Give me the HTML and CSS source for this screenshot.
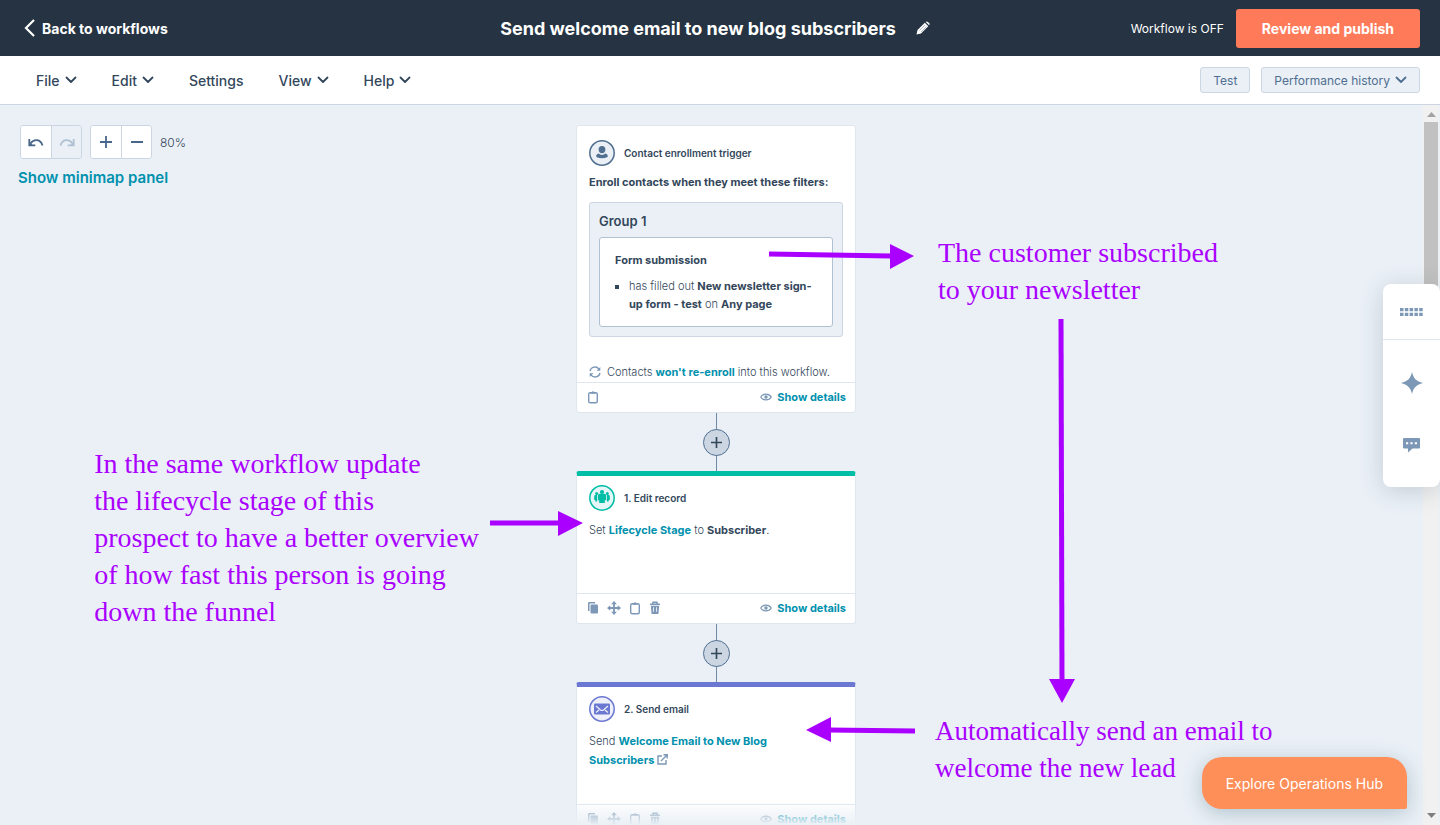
FILE: index.html
```html
<!DOCTYPE html>
<html lang="en">
<head>
    <meta charset="UTF-8">
    <meta name="viewport" content="width=device-width, initial-scale=1.0">
    <title>Send welcome email to new blog subscribers</title>
    <link rel="stylesheet" href="styles.css">
</head>
<body>

    <!-- Shared icons -->
    <svg class="sprite" aria-hidden="true">
        <symbol id="chevron" viewBox="0 0 12 8"><path d="M1.5 1.5 6 6l4.500-4.500" fill="none" stroke="currentColor" stroke-width="1.800" stroke-linecap="round" stroke-linejoin="round"/></symbol>
        <symbol id="undo" viewBox="0 0 16 10"><path d="M2.500 6.500C6 1.500 12.500 2 14.500 8.500" fill="none" stroke="currentColor" stroke-width="1.800"/><path d="M1.300 2v6.300h6" fill="none" stroke="currentColor" stroke-width="1.800"/><path d="M1 4.500v4h4z" fill="currentColor"/></symbol>
        <symbol id="plus" viewBox="0 0 12 12"><path d="M6 0v12M0 6h12" stroke="currentColor" stroke-width="1.800"/></symbol>
        <symbol id="eye" viewBox="0 0 12 8"><path d="M.8 4C3 .2 9 .2 11.200 4 9 7.800 3 7.800.8 4z" fill="none" stroke="currentColor" stroke-width="1.300"/><circle cx="6" cy="4" r="1.700" fill="currentColor"/></symbol>
        <symbol id="clipboard" viewBox="0 0 12 14"><rect x="1.700" y="2.700" width="8.600" height="10" rx="1.500" fill="none" stroke="currentColor" stroke-width="1.400"/><path d="M3.500 3.800V2h1.300a1.300 1.300 0 0 1 2.400 0h1.300v1.800z" fill="currentColor"/></symbol>
        <symbol id="copy" viewBox="0 0 12 14"><path d="M1 10V2.500C1 1.700 1.500 1 2.500 1H8v1.500H3.500C2.700 2.500 2.500 3 2.500 3.500V10z" fill="currentColor"/><rect x="3.500" y="3.500" width="7.500" height="9" rx="1" fill="currentColor"/></symbol>
        <symbol id="move" viewBox="0 0 14 14"><path d="M7 2v10M2 7h10" stroke="currentColor" stroke-width="1.800"/><path d="M7 0l2.800 3.300H4.200zM7 14l2.800-3.300H4.200zM0 7l3.300-2.800v5.600zM14 7l-3.300-2.800v5.600z" fill="currentColor"/></symbol>
        <symbol id="trash" viewBox="0 0 12 14"><path d="M1 3.200h10M4 3V1.200h4V3" fill="none" stroke="currentColor" stroke-width="1.500"/><path fill-rule="evenodd" d="M1.800 4.800h8.400l-.8 8.200H2.600zM4.200 6.300v4.500h.8V6.300zm2.800 0v4.500h.8V6.300z" fill="currentColor"/></symbol>
    </svg>

    <!-- Top bar -->
    <header class="topbar">
        <a href="#" class="back-link">
            <svg class="back-icon" viewBox="0 0 12 18"><path d="M10 1 2 9l8 8" fill="none" stroke="currentColor" stroke-width="2.200"/></svg>
            Back to workflows
        </a>
        <div class="title">
            <h1>Send welcome email to new blog subscribers</h1>
            <button class="icon-button" aria-label="Edit name">
                <svg width="14" height="14" viewBox="0 0 14 14"><path d="M.5 13.500l1-4.500L8.800 1.700l3.500 3.500L5 12.500zM9.700.9c.7-.7 1.500-.7 2.200 0l1.200 1.200c.7.7.7 1.500 0 2.200z" fill="#fff"/><path d="M3.500 9.500l5.500-5.500M5 11l5.500-5.500" stroke="#7c8994" stroke-width=".6"/></svg>
            </button>
        </div>
        <div class="publish">
            <span>Workflow is OFF</span>
            <button class="publish-button">Review and publish</button>
        </div>
    </header>

    <!-- Menu bar -->
    <nav class="menubar">
        <div class="menus">
            <button>File <svg class="chevron"><use href="#chevron"/></svg></button>
            <button>Edit <svg class="chevron"><use href="#chevron"/></svg></button>
            <button>Settings</button>
            <button>View <svg class="chevron"><use href="#chevron"/></svg></button>
            <button>Help <svg class="chevron"><use href="#chevron"/></svg></button>
        </div>
        <div class="actions">
            <button>Test</button>
            <button>Performance history <svg class="chevron"><use href="#chevron"/></svg></button>
        </div>
    </nav>

    <!-- Workflow canvas -->
    <main class="canvas">
        <div class="tools">
            <div class="tool-row">
                <div class="tool-group">
                    <button aria-label="Undo"><svg width="16" height="10"><use href="#undo"/></svg></button>
                    <button aria-label="Redo" disabled><svg class="flip" width="16" height="10"><use href="#undo"/></svg></button>
                </div>
                <div class="tool-group">
                    <button aria-label="Zoom in"><svg width="12" height="12"><use href="#plus"/></svg></button>
                    <button aria-label="Zoom out"><svg width="12" height="12"><path d="M0 6h12" stroke="currentColor" stroke-width="2"/></svg></button>
                </div>
                <span>80%</span>
            </div>
            <a href="#" class="minimap-link">Show minimap panel</a>
        </div>

        <div class="flow">
            <section class="card trigger">
                <div class="card-body">
                    <div class="card-title">
                        <svg class="badge" viewBox="0 0 26 26"><circle cx="13" cy="13" r="12.200" fill="#eaf0f6" stroke="#516f90" stroke-width="1.500"/><path d="M13 6c2.300 0 3.400 1.400 3.400 3.400S15 13.300 13 13.300 9.600 11.500 9.600 9.400 10.700 6 13 6zM9.500 13.500c2 1.900 5 1.900 7 0 1.500.5 2.300 1.500 2.300 2.800 0 .9-1.800 2-5.800 2s-5.800-1.100-5.800-2c0-1.300.8-2.300 2.300-2.800z" fill="#516f90"/></svg>
                        <h2>Contact enrollment trigger</h2>
                    </div>
                    <p class="lead">Enroll contacts when they meet these filters:</p>
                    <div class="group">
                        <h3>Group 1</h3>
                        <div class="filter">
                            <h4>Form submission</h4>
                            <ul>
                                <li>has filled out <b>New newsletter sign-up form - test</b> on <b>Any page</b></li>
                            </ul>
                        </div>
                    </div>
                    <p class="reenroll">
                        <svg width="12" height="12" viewBox="0 0 12 12"><path d="M1 5A5 5 0 0 1 10 3.200M11 7A5 5 0 0 1 2 8.800" fill="none" stroke="#7c98b6" stroke-width="1.300"/><path d="M11.300 1v3.800H7.500zM.7 11V7.200h3.800z" fill="#7c98b6"/></svg>
                        <span>Contacts <a href="#">won't re-enroll</a> into this workflow.</span>
                    </p>
                </div>
                <footer>
                    <button aria-label="Copy to clipboard"><svg width="12" height="14"><use href="#clipboard"/></svg></button>
                    <a href="#" class="details"><svg width="12" height="8"><use href="#eye"/></svg>Show details</a>
                </footer>
            </section>

            <div class="connector"><button aria-label="Add action"><svg width="11" height="11"><use href="#plus"/></svg></button></div>

            <section class="card step record">
                <div class="card-body">
                    <div class="card-title">
                        <svg class="badge" viewBox="0 0 26 26"><circle cx="13" cy="13" r="12.200" fill="#e5f5f8" stroke="#00bda5" stroke-width="1.500"/><g fill="#00bda5"><circle cx="13" cy="7" r="2.100"/><path d="M10.600 8.800h4.800c1 0 1.600.8 1.600 1.600v4.800h-1.200v2.700h-5.600v-2.700H9v-4.800c0-.8.600-1.600 1.600-1.600z"/><circle cx="7.700" cy="8.500" r="1.500"/><circle cx="18.300" cy="8.500" r="1.500"/><path d="M6.300 10h1.900v6.600H6.300V15H5.200v-3.600c0-.8.500-1.400 1.100-1.400zM19.700 10h-1.900v6.600h1.900V15h1.100v-3.600c0-.8-.5-1.400-1.100-1.400z"/></g></svg>
                        <h2>1. Edit record</h2>
                    </div>
                    <p class="text">Set <a href="#">Lifecycle Stage</a> to <b>Subscriber</b>.</p>
                </div>
                <footer>
                    <button aria-label="Copy"><svg width="12" height="14"><use href="#copy"/></svg></button>
                    <button aria-label="Move"><svg width="14" height="14"><use href="#move"/></svg></button>
                    <button aria-label="Copy to clipboard"><svg width="12" height="14"><use href="#clipboard"/></svg></button>
                    <button aria-label="Delete"><svg width="12" height="14"><use href="#trash"/></svg></button>
                    <a href="#" class="details"><svg width="12" height="8"><use href="#eye"/></svg>Show details</a>
                </footer>
            </section>

            <div class="connector"><button aria-label="Add action"><svg width="11" height="11"><use href="#plus"/></svg></button></div>

            <section class="card step email">
                <div class="card-body">
                    <div class="card-title">
                        <svg class="badge" viewBox="0 0 26 26"><circle cx="13" cy="13" r="12.200" fill="#f0f0fa" stroke="#6a78d1" stroke-width="1.500"/><rect x="5" y="7.500" width="16" height="11" rx="1" fill="#6a78d1"/><path d="M7 10l4.500 4q1.500 1 3 0L19 10M7 16.500l3-2.500M19 16.500 16 14" fill="none" stroke="#f0f0fa" stroke-width="1.200"/></svg>
                        <h2>2. Send email</h2>
                    </div>
                    <p class="text">Send <a href="#">Welcome Email to New Blog Subscribers <svg width="11" height="11" viewBox="0 0 11 11"><path d="M5 2H1v8h8V6M6.500.8h3.700v3.700M10 1 4 7" fill="none" stroke="#7c98b6" stroke-width="1.400"/></svg></a></p>
                </div>
                <footer>
                    <button aria-label="Copy"><svg width="12" height="14"><use href="#copy"/></svg></button>
                    <button aria-label="Move"><svg width="14" height="14"><use href="#move"/></svg></button>
                    <button aria-label="Copy to clipboard"><svg width="12" height="14"><use href="#clipboard"/></svg></button>
                    <button aria-label="Delete"><svg width="12" height="14"><use href="#trash"/></svg></button>
                    <a href="#" class="details"><svg width="12" height="8"><use href="#eye"/></svg>Show details</a>
                </footer>
            </section>

            <!-- Notes pinned next to the steps -->
            <p class="note note-subscribed">The customer subscribed<br>to your newsletter</p>
            <p class="note note-lifecycle">In the same workflow update<br>the lifecycle stage of this<br>prospect to have a better overview<br>of how fast this person is going<br>down the funnel</p>
            <p class="note note-email">Automatically send an email to<br>welcome the new lead</p>
            <svg class="arrows" width="280" height="700" viewBox="0 0 280 700" aria-hidden="true">
                <g stroke="#a0f" stroke-width="5">
                    <path d="M193 129l122 2"/>
                    <path d="M485 194l1 362"/>
                    <path d="M-86 398h70"/>
                    <path d="M339 606l-86-1"/>
                </g>
                <path d="M338 131l-24-12v25zM486 578l-13-24h26zM7 398l-25-12v25zM230 605l25-13v25z" fill="#a0f"/>
            </svg>
        </div>

        <div class="fade"></div>

        <div class="scrollbar">
            <svg width="9" height="5"><path d="M4.500 0 9 5H0z" fill="#a3a3a3"/></svg>
            <div class="thumb"></div>
            <svg width="9" height="5"><path d="M0 0h9L4.500 5z" fill="#7f7f7f"/></svg>
        </div>

        <aside class="side-panel">
            <button aria-label="Open panel">
                <svg width="23" height="8" viewBox="0 0 23 8" fill="#7c98b6"><path d="M0 0h3.500v3.300H0zM4.800 0h3.500v3.300H4.800zM9.600 0h3.500v3.300H9.600zM14.400 0h3.500v3.300h-3.500zM19.200 0h3.500v3.300h-3.500zM0 4.700h3.500V8H0zM4.800 4.700h3.500V8H4.800zM9.600 4.700h3.500V8H9.600zM14.400 4.700h3.500V8h-3.500zM19.200 4.700h3.500V8h-3.500z"/></svg>
            </button>
            <button aria-label="Assistant">
                <svg width="22" height="22" viewBox="0 0 22 22"><path d="M11 0c1.500 6.500 4.500 9.500 11 11-6.500 1.500-9.500 4.500-11 11-1.500-6.500-4.500-9.500-11-11C6.500 9.500 9.500 6.500 11 0z" fill="#7c98b6"/></svg>
            </button>
            <button aria-label="Comments">
                <svg width="17" height="15" viewBox="0 0 17 15"><path d="M1 0h15q1 0 1 1v8.500q0 1-1 1H9.500L5 14.500v-4H1q-1 0-1-1V1q0-1 1-1z" fill="#7c98b6"/><path d="M3 4.300h2.200v2H3zM7.400 4.300h2.200v2H7.400zM11.800 4.300H14v2h-2.200z" fill="#fff"/></svg>
            </button>
        </aside>

        <button class="explore">Explore Operations Hub</button>
    </main>

</body>
</html>
```

FILE: styles.css
```css
* {
    margin: 0;
    padding: 0;
    box-sizing: border-box;
}

body {
    display: flex;
    flex-direction: column;
    height: 100vh;
    overflow: hidden;
    font-family: Inter, 'Open Sans', sans-serif;
    font-size: 11px;
    color: #33475b;
    background-color: #eaf0f6;
}

button {
    font: inherit;
    color: inherit;
    background: none;
    border: none;
    cursor: pointer;
}

a {
    color: #0091ae;
    font-weight: 700;
    text-decoration: none;
}

.sprite {
    position: absolute;
    width: 0;
    height: 0;
}

/* Top bar */
.topbar {
    display: grid;
    grid-template-columns: 1fr auto 1fr;
    align-items: center;
    flex: none;
    height: 56px;
    padding: 0 20px 0 10px;
    background-color: #253342;
    color: #fff;
}

.back-link {
    display: flex;
    align-items: center;
    gap: 6px;
    padding-left: 14px;
    color: #fff;
    font-size: 14px;
}

.back-icon {
    width: 12px;
    height: 18px;
}

.title {
    display: flex;
    align-items: center;
    gap: 20px;
}

.title h1 {
    font-size: 18px;
    font-weight: 700;
}

.icon-button {
    display: flex;
}

.publish {
    display: flex;
    justify-content: flex-end;
    align-items: center;
    gap: 12px;
    font-size: 12px;
}

.publish-button {
    height: 39px;
    padding: 0 26px;
    border-radius: 3px;
    background-color: #ff7a59;
    font-size: 14px;
    font-weight: 700;
}

/* Menu bar */
.menubar {
    display: flex;
    justify-content: space-between;
    align-items: center;
    flex: none;
    height: 49px;
    padding: 0 20px 0 36px;
    border-bottom: 1px solid #cbd6e2;
    background-color: #fff;
}

.menus,
.actions {
    display: flex;
}

.menus {
    gap: 35px;
    font-size: 14px;
    font-weight: 500;
}

.menus button,
.actions button {
    display: flex;
    align-items: center;
    gap: 5px;
}

.chevron {
    width: 12px;
    height: 8px;
}

.actions {
    gap: 11px;
}

.actions button {
    height: 26px;
    padding: 0 12px;
    border: 1px solid #cbd6e2;
    border-radius: 3px;
    background-color: #eaf0f6;
    color: #506e91;
    font-size: 12px;
}

/* Canvas */
.canvas {
    position: relative;
    display: flex;
    justify-content: center;
    align-items: flex-start;
    flex: 1;
    min-height: 0;
    padding: 20px 8px 0 0;
    overflow: hidden;
}

.tools {
    position: absolute;
    top: 20px;
    left: 18px;
}

.tool-row {
    display: flex;
    align-items: center;
    gap: 8px;
    margin: 0 0 9px 2px;
    font-size: 12px;
    font-weight: 300;
}

.tool-group {
    display: flex;
    border: 1px solid #cbd6e2;
    border-radius: 3px;
    overflow: hidden;
}

.tool-group button {
    display: flex;
    align-items: center;
    justify-content: center;
    width: 30px;
    height: 32px;
    background-color: #fff;
    color: #48678a;
}

.tool-group button + button {
    border-left: 1px solid #cbd6e2;
}

.tool-group button:disabled {
    background-color: #eaf0f6;
    color: #b0c1d4;
}

.flip {
    transform: scaleX(-1);
}

.minimap-link {
    font-size: 15px;
    font-weight: 600;
}

/* Cards */
.flow {
    position: relative;
    width: 280px;
}

.card {
    display: flex;
    flex-direction: column;
    border: 1px solid #dfe6ee;
    border-radius: 3px;
    background-color: #fff;
}

.trigger {
    min-height: 288px;
}

.step {
    min-height: 153px;
    border-top-width: 5px;
}

.record {
    border-top-color: #00bda5;
}

.email {
    border-top-color: #6a78d1;
}

.card-body {
    flex: 1;
    padding: 14px 12px 0;
}

.step .card-body {
    padding-top: 9px;
}

.card-title {
    display: flex;
    align-items: center;
    gap: 9px;
}

.card-title h2 {
    font-size: 10px;
    font-weight: 600;
}

.badge {
    width: 26px;
    height: 26px;
}

.lead {
    margin: 7px 0 11px;
    font-weight: 700;
    line-height: 18px;
    white-space: nowrap;
}

.group {
    padding: 9px;
    border: 1px solid #cbd6e2;
    border-radius: 3px;
    background-color: #eaf0f6;
}

.group h3 {
    margin-bottom: 7px;
    font-size: 13px;
    font-weight: 600;
    line-height: 18px;
}

.filter {
    padding: 13px 15px;
    border: 1px solid #b0c1d4;
    border-radius: 3px;
    background-color: #fff;
}

.filter h4 {
    margin-bottom: 8px;
    font-size: 11px;
    font-weight: 700;
    line-height: 18px;
}

.filter ul {
    padding-left: 14px;
    list-style: square;
    font-weight: 300;
    line-height: 18px;
}

b {
    font-weight: 700;
}

.reenroll {
    display: flex;
    align-items: center;
    gap: 6px;
    margin-top: 26px;
    font-weight: 300;
    line-height: 18px;
    white-space: nowrap;
}

.text {
    margin-top: 10px;
    padding-right: 40px;
    font-weight: 300;
    line-height: 19px;
}

.text svg {
    vertical-align: -1px;
}

.card footer {
    display: flex;
    align-items: center;
    gap: 8px;
    height: 30px;
    padding: 0 9px 2px 10px;
    border-top: 1px solid #dfe6ee;
    color: #7c98b6;
}

.card footer button {
    display: flex;
}

.card footer .details {
    display: flex;
    align-items: center;
    gap: 5px;
    margin-left: auto;
    font-size: 11px;
}

.details svg {
    color: #7c98b6;
}

.connector {
    display: flex;
    align-items: center;
    justify-content: center;
    height: 58px;
    background: linear-gradient(#7089a5, #7089a5) center / 1px 100% no-repeat;
}

.connector button {
    display: flex;
    align-items: center;
    justify-content: center;
    width: 27px;
    height: 27px;
    border: 1px solid #516f90;
    border-radius: 50%;
    background-color: #cbd6e2;
}

/* Notes and arrows */
.note {
    position: absolute;
    color: #a0f;
    font-family: 'Liberation Serif', serif;
    font-size: 28px;
    line-height: 37px;
    white-space: nowrap;
}

.note-subscribed {
    top: 109px;
    left: 362px;
}

.note-lifecycle {
    top: 320px;
    right: 377px;
}

.note-email {
    top: 588px;
    left: 359px;
    font-size: 27px;
}

.arrows {
    position: absolute;
    top: 0;
    left: 0;
    overflow: visible;
    pointer-events: none;
}

.fade {
    position: absolute;
    right: 0;
    bottom: 0;
    left: 0;
    height: 24px;
    background: linear-gradient(rgba(234, 240, 246, 0), #eaf0f6);
}

/* Scrollbar */
.scrollbar {
    position: absolute;
    top: 0;
    right: 1px;
    bottom: 0;
    display: flex;
    flex-direction: column;
    align-items: center;
    justify-content: space-between;
    width: 16px;
    padding: 7px 0;
    background-color: #f1f1f1;
}

.thumb {
    width: 14px;
    height: 34%;
    margin: 5px 0 auto;
    background-color: #c1c1c1;
}

/* Floating panel */
.side-panel {
    position: absolute;
    top: 179px;
    right: 0;
    width: 57px;
    border-radius: 8px;
    background-color: #fff;
    box-shadow: 0 4px 24px rgba(45, 62, 80, 0.2);
}

.side-panel button {
    display: flex;
    align-items: center;
    justify-content: center;
    width: 100%;
    height: 56px;
}

.side-panel button + button {
    height: 63px;
    margin-bottom: 10px;
}

.side-panel button:first-child {
    margin-bottom: 11px;
    border-bottom: 1px solid #dfe6ee;
}

.side-panel button:nth-child(2) {
    margin-bottom: 0;
}

.explore {
    position: absolute;
    right: 33px;
    bottom: 16px;
    height: 52px;
    padding: 0 24px;
    border-radius: 20px 20px 2px 20px;
    background-color: #ff8f59;
    box-shadow: 0 4px 20px rgba(45, 90, 110, 0.3);
    color: #fff;
    font-size: 14px;
}
```
